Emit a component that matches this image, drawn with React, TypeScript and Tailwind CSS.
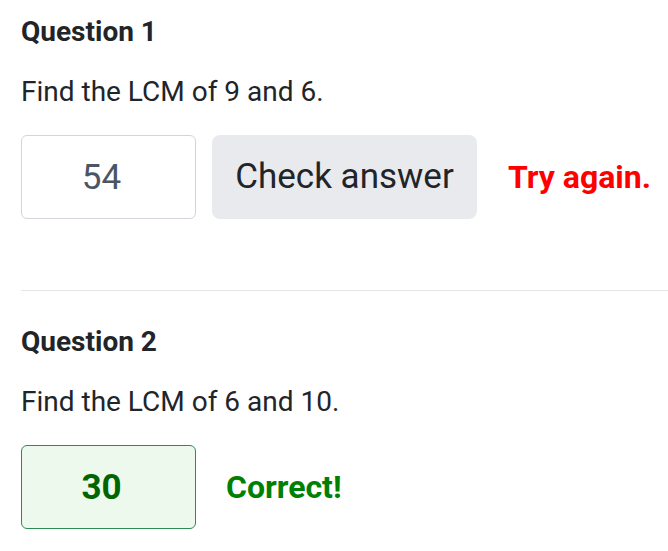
import { useState } from 'react'

type Estado = 'errado' | 'certo' | null

interface QuestaoProps {
  numero: number
  a: number
  b: number
  valor: string
  estado: Estado
  mostrarBotao: boolean
}

function Questao({ numero, a, b, valor, estado, mostrarBotao }: QuestaoProps) {
  const [resp, setResp] = useState(valor)
  const certo = estado === 'certo'

  return (
    <div className="flex flex-col">
      <div className="text-[28px] leading-[32px] font-bold text-[#212529]">Question {numero}</div>
      <div className="mt-[28px] text-[28px] leading-[32px] text-[#212529]">Find the LCM of {a} and {b}.</div>
      <div className="mt-[27px] flex items-center">
        <input
          value={resp}
          onChange={e => setResp(e.target.value)}
          readOnly={certo}
          className={certo
            ? 'w-[175px] h-[84px] pr-[14px] rounded-[6px] border border-[#2e8b57] bg-[#edf9ed] text-center text-[35px] font-bold text-[#006400] outline-none'
            : 'w-[175px] h-[84px] pr-[14px] rounded-[6px] border border-[#d1d5db] bg-white text-center text-[35px] text-[#4b5563] outline-none'}
        />
        {mostrarBotao && (
          <button className="ml-[16px] h-[84px] w-[265px] rounded-[8px] bg-[#e8eaed] text-[35px] text-[#212529]">
            Check answer
          </button>
        )}
        {estado === 'errado' && (
          <span className="ml-[31px] text-[32px] font-bold text-[#ff0000]">Try again.</span>
        )}
        {certo && (
          <span className="ml-[30px] text-[32px] font-bold text-[#008000]">Correct!</span>
        )}
      </div>
    </div>
  )
}

export default function App() {
  return (
    <div className="w-full min-h-screen bg-white overflow-hidden pl-[21px] pt-[16px]" style={{ fontFamily: 'Roboto, "Liberation Sans", sans-serif' }}>
      <Questao numero={1} a={9} b={6} valor="54" estado="errado" mostrarBotao />
      <div className="mt-[71px] h-px bg-[#e5e7eb]" />
      <div className="pt-[35px]">
        <Questao numero={2} a={6} b={10} valor="30" estado="certo" mostrarBotao={false} />
      </div>
    </div>
  )
}
